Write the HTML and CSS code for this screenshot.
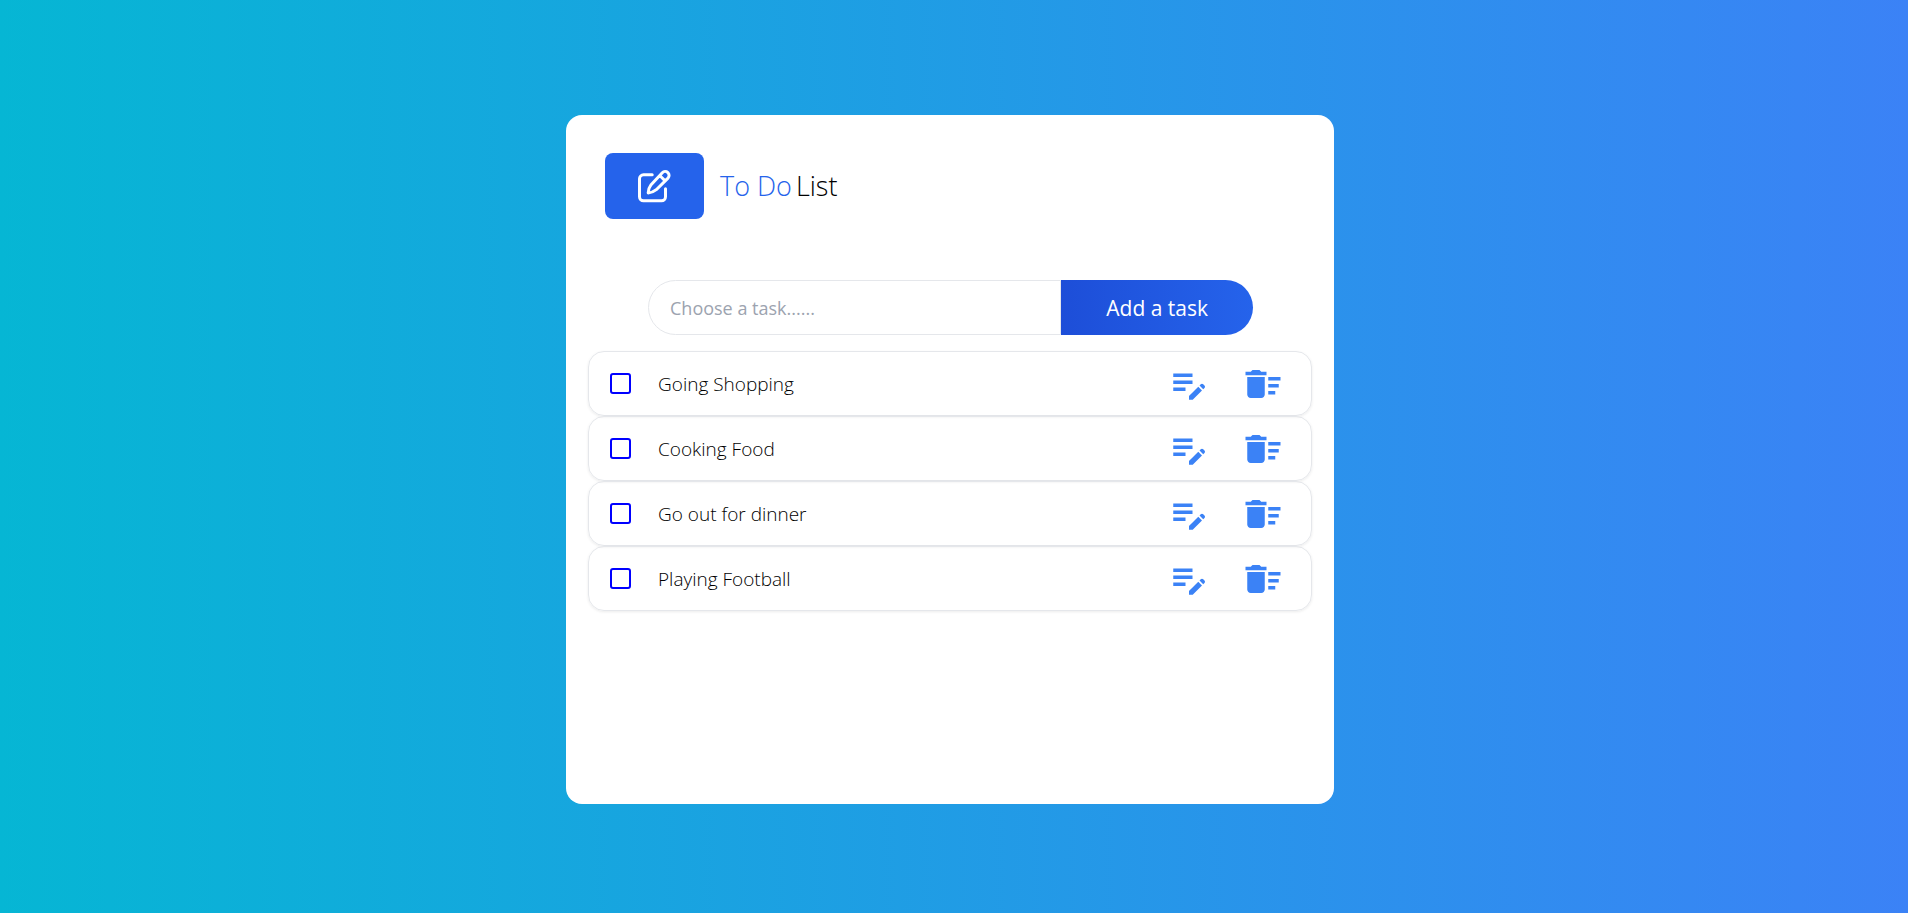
FILE: index.html
```html
<!DOCTYPE html>
<html lang="en">
<head>
<meta charset="utf-8">
<meta name="viewport" content="width=device-width, initial-scale=1">
<title>To Do List</title>
<link rel="stylesheet" href="styles.css">
</head>
<body>
<svg class="sprite" aria-hidden="true">
  <symbol id="edit" viewBox="0 0 24 24"><path d="M3 10h11v2H3v-2zm0-2h11V6H3v2zm0 8h7v-2H3v2zm15.01-3.13.71-.71c.39-.39 1.02-.39 1.41 0l.71.71c.39.39.39 1.02 0 1.41l-.71.71-2.12-2.12zm-.71.71-5.3 5.3V21h2.12l5.3-5.3-2.12-2.12z"/></symbol>
  <symbol id="delete" viewBox="0 0 24 24"><path d="M15 16h4v2h-4zm0-8h7v2h-7zm0 4h6v2h-6zM3 18c0 1.1.9 2 2 2h6c1.1 0 2-.9 2-2V8H3v10zM14 5h-3l-1-1H6L5 5H2v2h12z"/></symbol>
</svg>
<main class="card">
  <header class="header">
    <div class="logo">
      <svg viewBox="0 0 36 36" aria-hidden="true">
        <path d="M16.2 6.8H7.500a4 4 0 0 0-4 4v18a4 4 0 0 0 4 4h18a4 4 0 0 0 4-4v-8"/>
        <path d="M12.2 24.900c.1-2.600.9-5.600 2.900-8.200L26.300 4.700a3.900 3.900 0 0 1 5.700 5.400L20.300 21.700c-2.300 1.900-5.200 3.100-8.100 3.200zM23.700 7.500l5.500 5.300"/>
      </svg>
    </div>
    <h1 class="title"><span class="accent">To Do</span> <span>List</span></h1>
  </header>
  <form class="add">
    <input class="field" type="text" placeholder="Choose a task......" aria-label="Task">
    <button class="submit" type="button">Add a task</button>
  </form>
  <ul class="tasks">
    <li class="task">
      <input class="check" type="checkbox" id="task-1"><label class="name" for="task-1">Going Shopping</label>
      <button class="action" type="button" aria-label="Edit"><svg><use href="#edit"/></svg></button>
      <button class="action" type="button" aria-label="Delete"><svg><use href="#delete"/></svg></button>
    </li>
    <li class="task">
      <input class="check" type="checkbox" id="task-2"><label class="name" for="task-2">Cooking Food</label>
      <button class="action" type="button" aria-label="Edit"><svg><use href="#edit"/></svg></button>
      <button class="action" type="button" aria-label="Delete"><svg><use href="#delete"/></svg></button>
    </li>
    <li class="task">
      <input class="check" type="checkbox" id="task-3"><label class="name" for="task-3">Go out for dinner</label>
      <button class="action" type="button" aria-label="Edit"><svg><use href="#edit"/></svg></button>
      <button class="action" type="button" aria-label="Delete"><svg><use href="#delete"/></svg></button>
    </li>
    <li class="task">
      <input class="check" type="checkbox" id="task-4"><label class="name" for="task-4">Playing Football</label>
      <button class="action" type="button" aria-label="Edit"><svg><use href="#edit"/></svg></button>
      <button class="action" type="button" aria-label="Delete"><svg><use href="#delete"/></svg></button>
    </li>
  </ul>
</main>
</body>
</html>
```
FILE: styles.css
```css
* { box-sizing: border-box; }

body {
  margin: 0;
  min-height: 100vh;
  padding: 115px 8px 109px 0;
  display: flex;
  justify-content: center;
  background: linear-gradient(to right, #06b6d4, #3b82f6);
  font-family: "Segoe UI", "Open Sans", "Noto Sans", sans-serif;
  color: #000;
}

button, input { font: inherit; }

.sprite { display: none; }

.card {
  width: 100%;
  max-width: 768px;
  padding: 38px 22px;
  background: #fff;
  border-radius: 16px;
}

.header {
  display: flex;
  align-items: center;
  gap: 16px;
  padding: 0 17px;
}

.logo {
  display: grid;
  place-items: center;
  padding: 15px 32px 15px 31px;
  background: #2563eb;
  border-radius: 8px;
}

.logo svg {
  width: 36px;
  height: 36px;
  fill: none;
  stroke: #fff;
  stroke-width: 3;
  stroke-linecap: round;
  stroke-linejoin: round;
}

.title {
  display: flex;
  gap: 4px;
  margin: 0;
  font-size: 27px;
  font-weight: 360;
  line-height: 38px;
}

.accent { color: #2563eb; }

.add {
  display: flex;
  margin: 61px 59px 16px 60px;
}

.field {
  flex: 1;
  min-width: 0;
  height: 55px;
  padding: 0 21px;
  border: 1px solid #e5e7eb;
  border-radius: 28px 0 0 28px;
  font-size: 18px;
  background: #fff;
}

.field::placeholder { color: #9ca3af; opacity: 1; }

.submit {
  padding: 0 45px;
  border: 0;
  border-radius: 0 28px 28px 0;
  background: linear-gradient(to right, #1d4ed8, #2563eb);
  color: #fff;
  font-size: 21px;
}

.tasks {
  margin: 0;
  padding: 0;
  list-style: none;
}

.task {
  display: flex;
  align-items: center;
  min-height: 65px;
  padding: 0 27px 0 21px;
  border: 1px solid #e5e7eb;
  border-radius: 16px;
  box-shadow: 0 1px 3px rgba(0, 0, 0, 0.08);
}

.check {
  appearance: none;
  width: 21px;
  height: 21px;
  margin: 0;
  border: 2px solid #00f;
  border-radius: 3px;
}

.name {
  flex: 1;
  padding-left: 27px;
  font-size: 19px;
  font-weight: 350;
}

.action {
  padding: 0;
  border: 0;
  background: none;
  color: #3b82f6;
}

.action + .action { margin-left: 32px; }

.action svg {
  display: block;
  width: 42px;
  height: 42px;
  fill: currentColor;
}
```
